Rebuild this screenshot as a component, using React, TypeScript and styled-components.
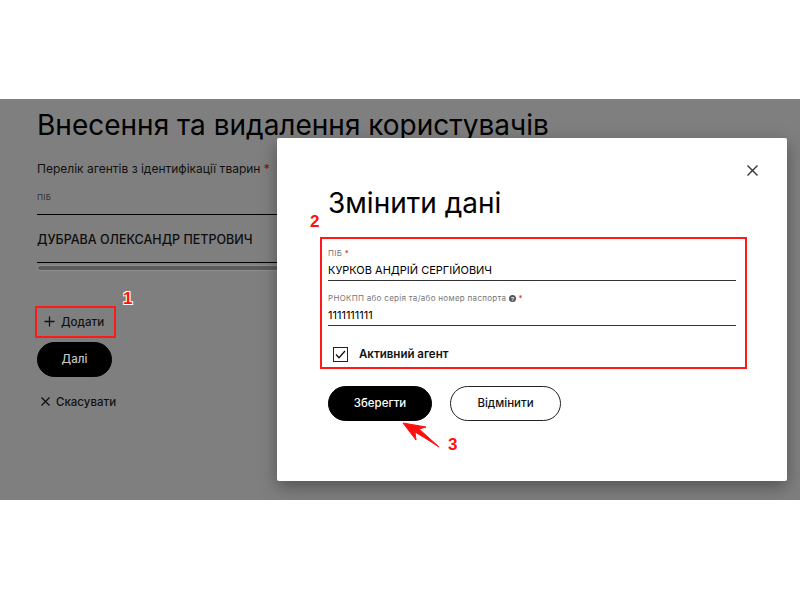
import React from 'react'
import styled, { createGlobalStyle } from 'styled-components'

const GlobalStyle = createGlobalStyle`
  html, body {
    margin: 0;
    padding: 0;
    background: #ffffff;
    font-family: Inter, "Noto Sans", sans-serif;
  }
`

const Screen = styled.div`
  width: 800px;
  height: 600px;
  display: flex;
  flex-direction: column;
  justify-content: center;
`

const Frame = styled.div`
  position: relative;
  height: 401px;
  margin-top: -2px;
  background: #7f7f7f;
  overflow: hidden;
`

const Page = styled.div`
  display: flex;
  flex-direction: column;
  align-items: flex-start;
  padding: 9px 37px 0;
`

const Heading = styled.h1`
  margin: 0;
  font-size: 28px;
  line-height: 34px;
  font-weight: 400;
  color: #000;
  white-space: nowrap;
`

const ListLabel = styled.div`
  margin-top: 20px;
  font-size: 12px;
  line-height: 14px;
  color: #111;
  span { color: #7a1010; }
`

const SmallLabel = styled.div<{ $top?: number }>`
  margin-top: ${p => p.$top ?? 15}px;
  font-size: 8px;
  letter-spacing: 0.3px;
  line-height: 10px;
  color: ${p => p.color ?? '#333'};
  span { color: #e02020; }
`

const ListField = styled.div`
  width: 300px;
  border-top: 1px solid #000;
  border-bottom: 1px solid #000;
  margin-top: 12px;
  padding: 17px 0 14px;
  font-size: 12.5px;
  line-height: 16px;
  font-weight: 500;
  color: #0d0d0d;
`

const ScrollBar = styled.div`
  width: 298px;
  height: 4px;
  margin: 3px 0 0 1px;
  border-radius: 3px;
  background: #5b5b5b;
  box-shadow: 0 0 0 1px #8e8e8e;
`

const Marked = styled.div`
  margin-top: 36px;
  margin-left: -2px;
  border: 2px solid #ff1a1a;
  width: 70px;
  height: 28px;
  display: flex;
  align-items: center;
  gap: 6px;
  padding-left: 7px;
  box-sizing: content-box;
  position: relative;
  font-size: 11.5px;
  font-weight: 500;
  color: #111;
`

const Num = styled.span<{ $size?: number }>`
  position: absolute;
  font-size: ${p => p.$size ?? 17}px;
  font-weight: 800;
  color: #ff1010;
  font-family: "Liberation Sans", Arial, sans-serif;
  text-shadow: -1px -1px 0 #fff, 1px -1px 0 #fff, -1px 1px 0 #fff, 1px 1px 0 #fff;
`

const PillButton = styled.button<{ $dark?: boolean; $width: number }>`
  width: ${p => p.$width}px;
  height: 35px;
  border-radius: 18px;
  border: 1.5px solid ${p => (p.$dark ? '#000' : '#222')};
  background: ${p => (p.$dark ? '#000' : '#fff')};
  color: ${p => (p.$dark ? '#fff' : '#111')};
  font-family: Inter, "Noto Sans", sans-serif;
  font-size: 11.5px;
  font-weight: 500;
  padding: 0;
`

const DimButton = styled(PillButton)`
  margin-top: 4px;
  color: #c4c4c4;
`

const TextLink = styled.div`
  margin-top: 18px;
  margin-left: 4px;
  display: flex;
  align-items: center;
  gap: 6px;
  font-size: 11.5px;
  font-weight: 500;
  color: #111;
`

const Modal = styled.div`
  position: absolute;
  left: 277px;
  top: 39px;
  width: 510px;
  height: 343px;
  box-sizing: border-box;
  padding: 48px 0 0 51px;
  background: #fff;
  border-radius: 2px;
  box-shadow: 0 6px 18px rgba(0, 0, 0, 0.35);
`

const Close = styled.button`
  position: absolute;
  right: 26px;
  top: 27px;
  width: 14px;
  height: 14px;
  padding: 0;
  border: 0;
  background: none;
  display: flex;
`

const ModalTitle = styled.h2`
  margin: 0;
  font-size: 28px;
  line-height: 34px;
  font-weight: 400;
  color: #000;
`

const FieldsBox = styled.div`
  position: relative;
  margin: 17px 0 0 -8px;
  width: 427px;
  height: 132px;
  box-sizing: border-box;
  border: 2px solid #ff1a1a;
  padding: 9px 9px 0 6px;
`

const FieldValue = styled.div<{ $top?: number }>`
  margin-top: ${p => p.$top ?? 4}px;
  padding-bottom: 3px;
  border-bottom: 1.5px solid #333;
  font-size: 11px;
  line-height: 14px;
  font-weight: 400;
  color: #000;
`

const CheckRow = styled.label`
  margin: 21px 0 0 5px;
  display: flex;
  align-items: center;
  gap: 11px;
  font-size: 11.5px;
  font-weight: 600;
  color: #111;
`

const Box = styled.span`
  width: 13px;
  height: 13px;
  border: 1.5px solid #222;
  display: flex;
  align-items: center;
  justify-content: center;
`

const Buttons = styled.div`
  margin-top: 17px;
  display: flex;
  gap: 18px;
`

const Arrow = styled.svg`
  position: absolute;
  left: 122px;
  top: 282px;
`

export default function App() {
  return (
    <Screen>
      <GlobalStyle />
      <Frame>
        <Page>
          <Heading>Внесення та видалення користувачів</Heading>
          <ListLabel>Перелік агентів з ідентифікації тварин <span>*</span></ListLabel>
          <SmallLabel $top={16}>ПІБ</SmallLabel>
          <ListField>ДУБРАВА ОЛЕКСАНДР ПЕТРОВИЧ</ListField>
          <ScrollBar />
          <Marked>
            <svg width="11" height="11" viewBox="0 0 11 11">
              <path d="M5.5 0.5v10M0.5 5.5h10" stroke="#111" strokeWidth="1.3" />
            </svg>
            Додати
            <Num style={{ left: 86, top: -19 }}>1</Num>
          </Marked>
          <DimButton $dark $width={75}>Далі</DimButton>
          <TextLink>
            <svg width="9" height="9" viewBox="0 0 9 9">
              <path d="M0.5 0.5l8 8M8.5 0.5l-8 8" stroke="#111" strokeWidth="1.3" />
            </svg>
            Скасувати
          </TextLink>
        </Page>
        <Modal>
          <Close aria-label="close">
            <svg width="11" height="11" viewBox="0 0 11 11">
              <path d="M0.5 0.5l10 10M10.5 0.5l-10 10" stroke="#333" strokeWidth="1.4" />
            </svg>
          </Close>
          <ModalTitle>Змінити дані</ModalTitle>
          <FieldsBox>
            <Num style={{ left: -12, top: -27 }}>2</Num>
            <SmallLabel $top={0} color="#777">ПІБ <span>*</span></SmallLabel>
            <FieldValue $top={5}>КУРКОВ АНДРІЙ СЕРГІЙОВИЧ</FieldValue>
            <SmallLabel $top={12} color="#777">
              РНОКПП або серія та/або номер паспорта{' '}
              <svg width="7" height="7" viewBox="0 0 8 8" style={{ verticalAlign: -1 }}>
                <circle cx="4" cy="4" r="4" fill="#555" />
                <text x="4" y="6.3" fontSize="6.5" fontWeight="700" textAnchor="middle" fill="#fff" fontFamily="Liberation Sans, sans-serif">?</text>
              </svg>{' '}
              <span>*</span>
            </SmallLabel>
            <FieldValue $top={5}>1111111111</FieldValue>
            <CheckRow>
              <Box>
                <svg width="11" height="9" viewBox="0 0 11 9">
                  <path d="M1 4.5l3 3.2L10 1" stroke="#111" strokeWidth="1.3" fill="none" />
                </svg>
              </Box>
              Активний агент
            </CheckRow>
          </FieldsBox>
          <Buttons>
            <PillButton $dark $width={104}>Зберегти</PillButton>
            <PillButton $width={111}>Відмінити</PillButton>
          </Buttons>
          <Arrow width="50" height="32" viewBox="0 0 50 32">
            <path d="M4 3 L17 20 L16 12 Q28 19 40 27 Q28 16 20 9 L27 7 Z" fill="#ff1010" stroke="#ff1010" strokeWidth="1" strokeLinejoin="round" />
          </Arrow>
          <Num style={{ left: 171, top: 297 }}>3</Num>
        </Modal>
      </Frame>
    </Screen>
  )
}
